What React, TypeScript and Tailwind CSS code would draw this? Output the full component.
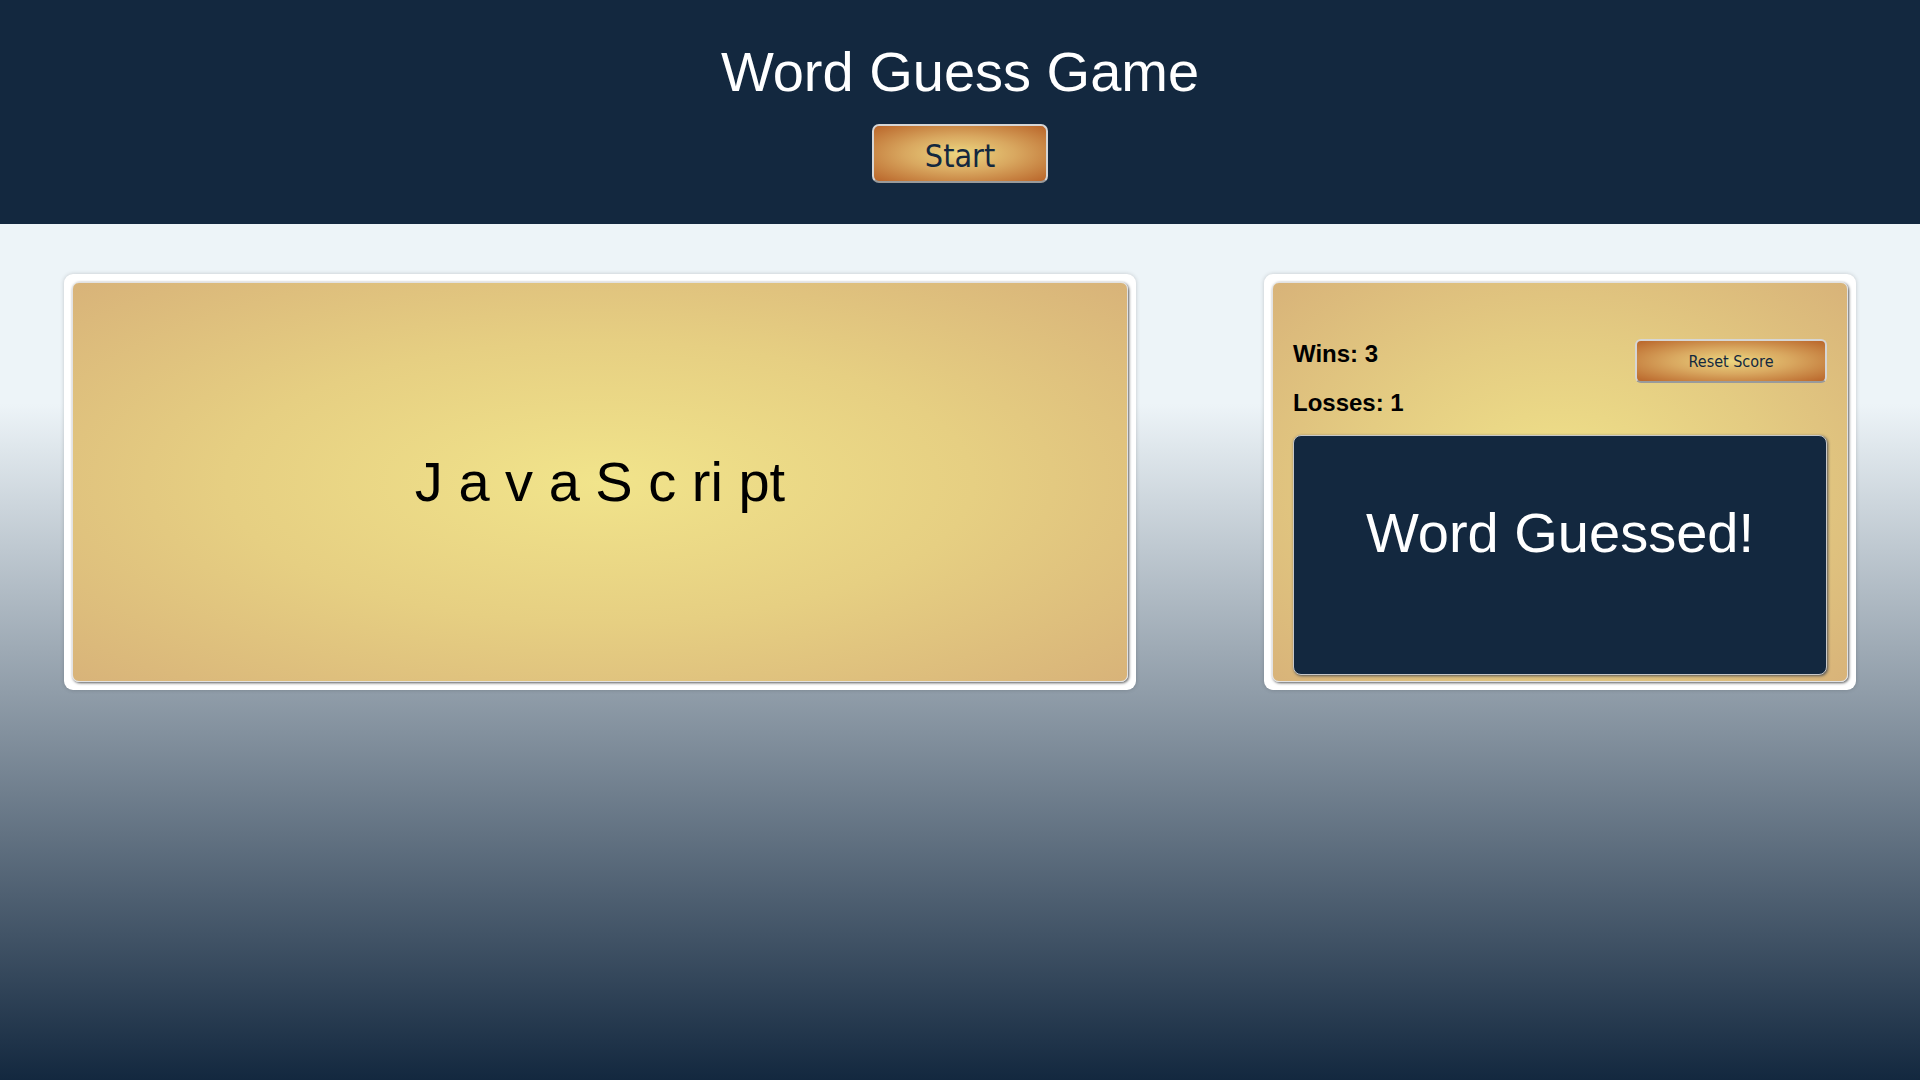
import React from "react";

const btnFont = { fontFamily: 'Tahoma, "DejaVu Sans Condensed", "Noto Sans", sans-serif' };

export default function App() {
  return (
    <div className="w-[1920px] h-[1080px] flex flex-col font-['Liberation_Sans',Arial,sans-serif]">
      <header className="h-[224px] shrink-0 bg-[#13283f] flex flex-col items-center pt-[41px]">
        <h1 className="text-[56px] leading-[62px] text-white font-normal">Word Guess Game</h1>
        <button
          style={btnFont}
          className="mt-[21px] w-[176px] h-[59px] rounded-[7px] border-2 border-[#d6d6d6] border-b-[#9a9a9a] bg-[radial-gradient(ellipse_at_center,#ecd680_0%,#d9a860_45%,#b9652a_100%)] text-[32px] leading-none text-[#13283f] flex items-center justify-center pt-[4px]"
        >
          Start
        </button>
      </header>
      <main className="flex-1 bg-[linear-gradient(180deg,#edf4f8_21%,#13283f_100%)] px-[64px] pt-[50px] flex justify-between items-start">
        <div className="w-[1072px] bg-white rounded-[9px] p-2 shadow-[0_0_4px_rgba(0,0,0,0.18)]">
          <div className="h-[400px] rounded-[7px] border border-[#e2e2e2] shadow-[1px_1px_3px_#555] bg-[radial-gradient(ellipse_at_center,#f1e48b_0%,#e6cf82_50%,#d8b379_100%)] flex items-center justify-center">
            <span className="text-[56px] leading-[62px] text-black whitespace-pre">J a v a S c ri pt</span>
          </div>
        </div>
        <div className="w-[592px] bg-white rounded-[9px] p-2 shadow-[0_0_4px_rgba(0,0,0,0.18)]">
          <div className="h-[400px] rounded-[7px] border border-[#e2e2e2] shadow-[1px_1px_3px_#555] bg-[radial-gradient(ellipse_at_center,#f0e28a_0%,#e4cc82_50%,#d8b379_100%)] px-[20px] pt-[56px]">
            <div className="flex justify-between items-start">
              <div className="mt-[1px] flex flex-col gap-[22px]">
                <p className="text-[24px] leading-[27px] font-bold text-black">Wins: 3</p>
                <p className="text-[24px] leading-[27px] font-bold text-black">Losses: 1</p>
              </div>
              <button
                style={btnFont}
                className="w-[192px] h-[44px] rounded-[6px] border-2 border-[#d6d6d6] border-b-[#9a9a9a] bg-[radial-gradient(ellipse_at_center,#ecd680_0%,#d9a860_45%,#b9652a_100%)] text-[16px] leading-none text-[#13283f] flex items-center justify-center pt-[2px]"
              >
                Reset Score
              </button>
            </div>
            <div className="mt-[19px] h-[240px] rounded-[8px] bg-[#13283f] border border-[#c8c8c8] shadow-[1px_1px_3px_#555] pt-[66px] flex justify-center">
              <h2 className="text-[56px] leading-[62px] text-white font-normal">Word Guessed!</h2>
            </div>
          </div>
        </div>
      </main>
    </div>
  );
}
